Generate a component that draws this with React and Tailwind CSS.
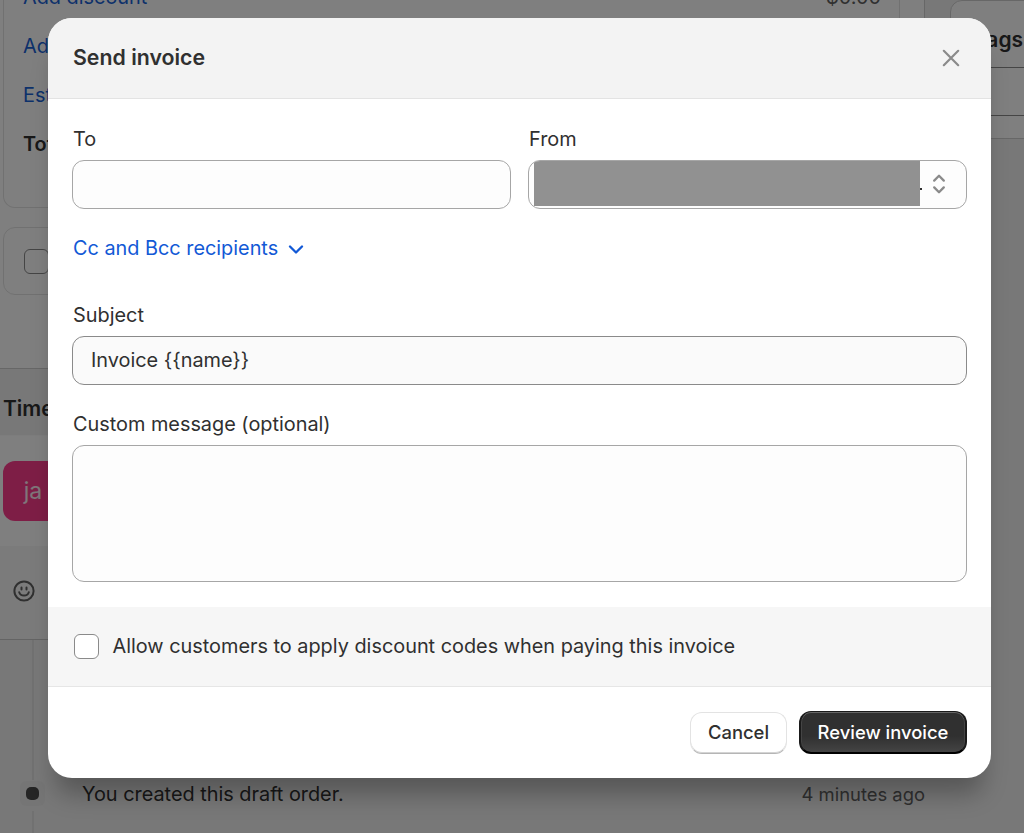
import clsx from "clsx";

function Field({ label, className, children }) {
  return (
    <div className={clsx("flex flex-col", className)}>
      <label className="mb-[7px] h-7 pl-[1px] leading-7">{label}</label>
      {children}
    </div>
  );
}

function DraftOrder() {
  return (
    <div className="flex h-[833px] items-start overflow-hidden bg-[#f1f1f1] text-[19.87px]">
      <div className="w-[925px] shrink-0">
        <section className="flow-root h-[369px] rounded-br-xl border-r border-b border-[#cfcfcf] bg-white pr-6 pl-[3px]">
          <div className="flow-root h-[208px] rounded-b-xl border border-t-0 border-[#e3e3e3] pr-[18px] pl-[19px] text-[#1a62d6]">
            <div className="-mt-[14px] flex h-6 items-center justify-between">
              <span>Add discount</span>
              <span className="text-[#616161]">$0.00</span>
            </div>
            <p className="mt-6 h-6 leading-6">Add shipping or delivery</p>
            <p className="mt-[25px] h-6 leading-6">Estimated tax</p>
            <p className="mt-[25px] h-6 leading-6 font-semibold text-[#303030]">Total</p>
          </div>
          <div className="mt-[19px] flex h-[68px] items-center rounded-xl border border-[#e3e3e3] pl-5">
            <span className="size-[25px] rounded-md border border-[#8a8a8a]" />
          </div>
        </section>

        <h2 className="flex h-[66px] items-center pt-[14px] pl-[3px] text-[21px] font-semibold text-[#303030]">
          Timeline
        </h2>

        <section className="h-[205px] border-t border-b border-t-[#fafafa] border-b-[#c8c8c8] bg-white">
          <div className="h-[110px] pt-[25px] pl-[3px]">
            <div className="flex h-[60px] w-[60px] items-center justify-center rounded-xl bg-[#fc3d8d] text-[23px] text-white/90">
              ja
            </div>
          </div>
          <div className="flex h-[93px] items-center bg-[#f7f7f7] pl-[13px]">
            <svg viewBox="0 0 22 22" className="-mt-[3px] size-[22px] text-[#616161]" fill="none" stroke="currentColor" strokeWidth="2" strokeLinecap="round">
              <circle cx="11" cy="11" r="9.6" />
              <path d="M8.5 7.4v2.2M13.5 7.4v2.2M6.2 12.2c.7 2.3 2.5 3.4 4.8 3.4s4.1-1.1 4.8-3.4" />
            </svg>
          </div>
        </section>

        <section className="flex">
          <div className="ml-[20px] flex w-[25px] flex-col items-center">
            <span className="h-[140px] w-[2px] bg-[#e3e3e3]" />
            <span className="my-[1px] flex h-[25px] w-[25px] shrink-0 items-center justify-center rounded-md bg-[#ebebeb]">
              <span className="size-[13px] rounded-[5px] bg-[#4a4a4a]" />
            </span>
            <span className="mt-1 h-8 w-[2px] bg-[#e3e3e3]" />
          </div>
          <div className="mt-[141px] flex h-7 flex-1 items-center justify-between pl-[37px]">
            <span className="text-[#303030]">You created this draft order.</span>
            <span className="text-[18.4px] text-[#616161]">4 minutes ago</span>
          </div>
        </section>
      </div>

      <aside className="ml-[25px] h-[139px] w-[460px] shrink-0 rounded-xl border border-[#cfcfcf] bg-white">
        <h2 className="flex h-[66px] items-center pt-3 pl-[23px] text-[21px] font-semibold text-[#303030]">Tags</h2>
        <div className="mx-6 h-[49px] rounded-xl border border-[#8a8a8a]" />
      </aside>
    </div>
  );
}

function InvoiceModal() {
  return (
    <div className="absolute top-[18px] left-[48px] flex h-[760px] w-[943px] flex-col overflow-hidden rounded-[24px] bg-white text-[19.87px] text-[#303030] shadow-[0_24px_24px_-8px_rgba(0,0,0,0.28)]">
      <header className="flex h-[81px] shrink-0 items-center justify-between border-b border-[#e3e3e3] bg-[#f3f3f3] pr-[31px] pl-[25px]">
        <h1 className="text-[21.3px] font-semibold">Send invoice</h1>
        <button aria-label="Close">
          <svg viewBox="0 0 18 18" className="size-[18px]" fill="none" stroke="#8a8a8a" strokeWidth="2.2" strokeLinecap="round">
            <path d="M1.8 1.8l14.4 14.4M16.2 1.8L1.8 16.2" />
          </svg>
        </button>
      </header>

      <div className="h-[508px] shrink-0 px-6 pt-[26px]">
        <div className="grid grid-cols-2 gap-[17px]">
          <Field label="To">
            <div className="h-[49px] rounded-xl border border-[#a6a6a6] bg-[#fdfdfd]" />
          </Field>
          <Field label="From">
            <div className="flex h-[49px] items-center overflow-hidden rounded-xl border border-[#a6a6a6] bg-[#fdfdfd] pl-[5px]">
              <span className="-mt-[2px] h-[45px] w-[386px] bg-[#919191]" />
              <span className="mt-[9px] size-[2px] bg-[#303030]" />
              <svg viewBox="0 0 14 20" className="-mt-[1px] ml-[10px] h-5 w-[14px]" fill="none" stroke="#8a8a8a" strokeWidth="2.3" strokeLinecap="round" strokeLinejoin="round">
                <path d="M2.2 6.6L7 1.8l4.8 4.8M2.2 13.4L7 18.2l4.8-4.8" />
              </svg>
            </div>
          </Field>
        </div>

        <button className="mt-[25px] flex h-7 items-center pl-[1px] text-[19.85px] text-[#1259d6]">
          <span className="pt-[1px]">Cc and Bcc recipients</span>
          <svg viewBox="0 0 16 10" className="mt-[3px] ml-[10px] h-[10px] w-4" fill="none" stroke="currentColor" strokeWidth="2.3" strokeLinecap="round" strokeLinejoin="round">
            <path d="M2 1.5l6 6 6-6" />
          </svg>
        </button>

        <Field label="Subject" className="mt-[39px]">
          <div className="flex h-[49px] items-center rounded-xl border border-[#8a8a8a] bg-[#fafafa] pt-[1px] pl-[18px]">
            {"Invoice {{name}}"}
          </div>
        </Field>

        <Field label="Custom message (optional)" className="mt-[25px]">
          <div className="h-[137px] rounded-xl border border-[#a6a6a6] bg-[#fdfdfd]" />
        </Field>
      </div>

      <div className="flex h-[80px] shrink-0 items-center border-b border-[#e6e6e6] bg-[#f6f6f6] pl-[26px]">
        <span className="size-[25px] rounded-md border border-[#8a8a8a] bg-white" />
        <span className="ml-[13.5px]">Allow customers to apply discount codes when paying this invoice</span>
      </div>

      <footer className="flex flex-1 items-center justify-end gap-3 pr-6 text-[18.4px] font-medium">
        <button className="h-[42px] w-[97px] rounded-xl border border-[#e3e3e3] border-b-[#b5b5b5] bg-white shadow-[inset_0_-1px_0_#d4d4d4]">
          Cancel
        </button>
        <button className="h-[43px] w-[168px] rounded-xl border-2 border-t border-[#1a1a1a] border-b-black bg-linear-to-b from-[#303030] from-60% to-[#444444] pt-[1px] text-white shadow-[inset_0_1px_0_#666,inset_1px_0_0_#444,inset_-1px_0_0_#444]">
          Review invoice
        </button>
      </footer>
    </div>
  );
}

export default function App() {
  return (
    <div className="relative h-[833px] w-[1024px] overflow-hidden font-[Inter,sans-serif]">
      <DraftOrder />
      <div className="absolute inset-0 bg-black/50" />
      <InvoiceModal />
    </div>
  );
}
